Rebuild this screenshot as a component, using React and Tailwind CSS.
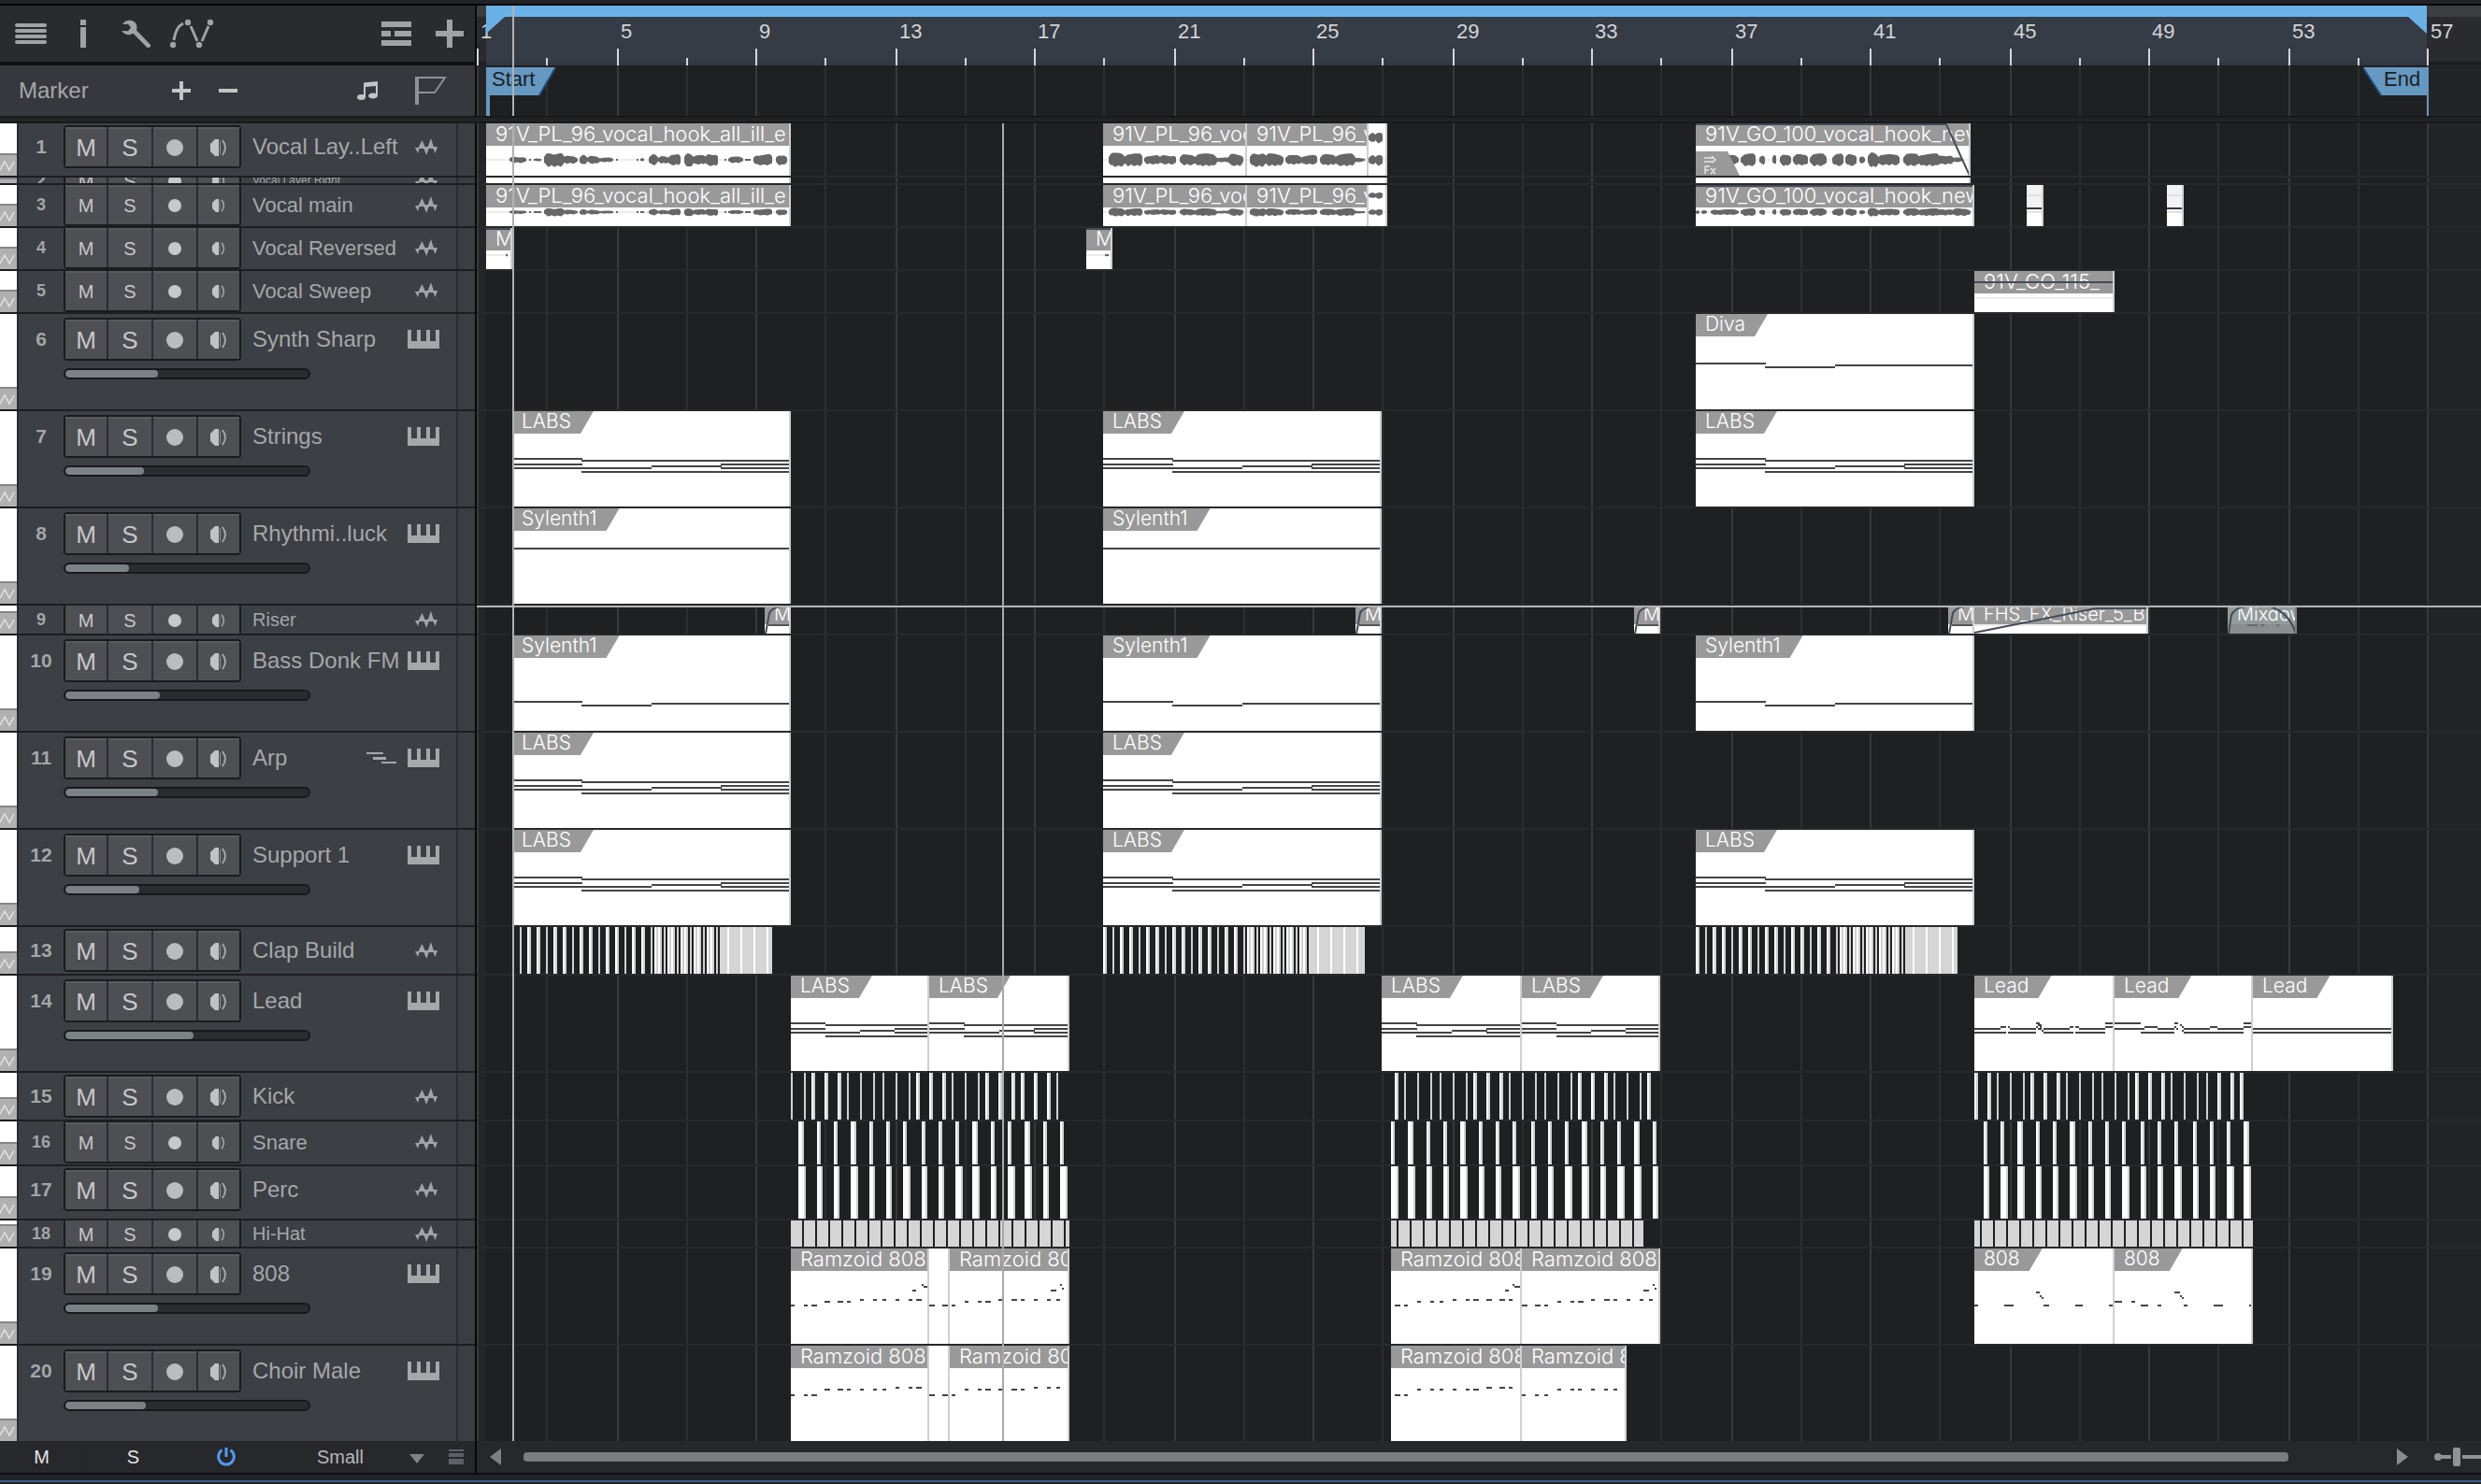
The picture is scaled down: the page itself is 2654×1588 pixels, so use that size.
import React from 'react';

const PX_PER_TICK = 74.5;
const tickX = (n) => 2 * Math.round((n * PX_PER_TICK) / 2);
const TICKS = Array.from({ length: 29 }, (_, n) => n);
const LOOP_START = 10;
const LOOP_END = 2086;

// note lanes are [x, y, width], x and width as a share of the clip
const chord = [
  [0, 50, 0.25], [0, 56, 0.25], [0, 60, 0.5],
  [0.25, 52, 0.75], [0.25, 64, 0.75], [0.5, 58, 0.25],
  [0.75, 56, 0.25], [0.75, 60, 0.25],
];
const flat = [[0, 42, 1]];
const bass = [[0, 70, 0.25], [0.25, 74, 0.25], [0.5, 72, 0.5]];
const diva = [[0, 52, 0.25], [0.25, 56, 0.25], [0.5, 54, 0.5]];

// melodic notes are [x, y, width] in px from the clip start
const leadA = [
  [0, 56, 28], [38, 56, 28], [74, 56, 28], [112, 56, 28],
  [0, 60, 34], [36, 60, 30], [74, 60, 32], [108, 60, 32],
  [28, 54, 6], [36, 54, 2], [66, 54, 2], [70, 54, 2], [102, 54, 4], [108, 54, 4], [140, 54, 10],
  [66, 50, 4], [140, 50, 10], [68, 52, 4], [68, 56, 4], [72, 58, 2],
];
const leadB = [
  [0, 50, 28], [64, 50, 4], [138, 50, 10],
  [32, 54, 14], [72, 54, 2], [102, 54, 8], [138, 54, 10],
  [0, 56, 32], [46, 56, 18], [74, 56, 28], [110, 56, 28],
  [28, 60, 36], [74, 60, 64],
  [64, 54, 2], [66, 56, 2], [70, 52, 2], [72, 58, 2],
];
const leadC = [[0, 56, 150], [0, 60, 150]];

const sub1 = [
  [0, 60, 4], [14, 60, 4], [22, 60, 6], [36, 56, 6], [50, 56, 6], [60, 56, 4],
  [74, 54, 4], [88, 54, 4], [98, 54, 4], [112, 54, 4], [126, 54, 4], [134, 54, 6],
  [130, 44, 4], [140, 38, 2], [142, 40, 4], [146, 42, 2],
];
const sub2 = [
  [0, 60, 6], [14, 60, 6], [24, 60, 4], [38, 56, 4], [52, 56, 4], [60, 56, 6],
  [74, 54, 4], [88, 54, 6], [98, 54, 4], [112, 54, 4], [126, 54, 4], [136, 54, 4],
  [130, 44, 6], [140, 38, 2], [142, 42, 2],
];
const sub3 = [
  [4, 60, 6], [14, 60, 4], [28, 56, 4], [42, 56, 4], [52, 56, 4], [66, 54, 4],
  [80, 54, 4], [88, 54, 6], [102, 54, 6], [116, 54, 6], [126, 54, 4],
  [122, 44, 4], [130, 38, 2], [132, 40, 6], [138, 42, 2],
];
const choir1 = [
  [0, 52, 4], [14, 52, 4], [22, 52, 6], [36, 46, 6], [50, 46, 6], [60, 46, 4],
  [74, 46, 4], [88, 46, 4], [98, 46, 4], [112, 44, 4], [126, 44, 4], [134, 44, 6],
];
const choir2 = [
  [0, 52, 6], [14, 52, 6], [24, 52, 4], [38, 46, 4], [52, 46, 4], [60, 46, 6],
  [74, 46, 4], [88, 46, 6], [98, 46, 4], [112, 44, 4], [126, 44, 4], [136, 44, 4],
];
const choir3 = [
  [4, 52, 6], [14, 52, 4], [28, 46, 4], [42, 46, 4], [52, 46, 4], [66, 46, 4],
  [80, 46, 4], [88, 46, 6], [102, 44, 6], [116, 44, 6], [126, 44, 4],
];
const choir4 = [
  [0, 52, 4], [14, 52, 4], [24, 52, 4], [38, 46, 4], [52, 46, 4], [60, 46, 4],
  [74, 46, 4], [88, 46, 4], [98, 46, 4],
];
const eightA = [[0, 60, 4], [32, 60, 10], [74, 60, 6], [108, 60, 8], [144, 60, 6], [66, 46, 4], [70, 50, 2], [72, 52, 2]];
const eightB = [
  [0, 56, 8], [18, 56, 4], [28, 60, 8], [46, 60, 4], [74, 60, 4], [106, 60, 10], [144, 60, 4],
  [64, 46, 6], [70, 50, 2], [72, 52, 2],
];

// wave blobs are [from, to, amplitude]
const hookA = [
  [25, 43, 4], [46, 48, 2], [51, 59, 2], [62, 84, 9], [82, 98, 5], [100, 108, 7], [108, 122, 5], [120, 136, 3],
  [139, 141, 1], [161, 163, 1], [165, 169, 3], [174, 184, 7], [184, 196, 5], [194, 209, 7], [212, 222, 10],
  [220, 236, 6], [234, 249, 8], [255, 257, 2], [259, 275, 4], [277, 283, 2], [286, 307, 7], [310, 322, 7],
];
const hookB = [[6, 24, 9], [22, 43, 8], [44, 62, 6], [60, 79, 6], [82, 100, 7], [98, 122, 8], [118, 138, 3], [134, 150, 8]];
const hookC = [[3, 21, 9], [19, 39, 8], [41, 59, 6], [57, 76, 6], [78, 96, 7], [94, 116, 8], [112, 126, 3]];
const hookTail = [[0, 8, 7], [7, 16, 8]];
const goHook = [
  [0, 4, 6], [6, 12, 5], [16, 46, 6], [48, 65, 8], [68, 75, 7], [82, 87, 8], [90, 102, 8], [104, 121, 7], [122, 140, 8],
  [146, 159, 8], [160, 173, 8], [175, 181, 6], [184, 196, 10], [194, 219, 7], [222, 240, 8], [238, 262, 8],
];

const SYMS = { thin: 2, mid: 4, six: 6, wide: 8 };
const bars = (start, kind, xs) => xs.map((x) => [start + x, SYMS[kind]]);

const kick = [
  ...bars(336, 'thin', [0, 14, 60, 74, 88, 98, 112, 126, 172, 186, 200, 284]),
  ...bars(336, 'mid', [22, 36, 50, 134, 148, 162, 208, 222, 236, 246, 260, 274]),
  ...bars(978, 'thin', [14, 28, 42, 52, 66, 80, 126, 140, 154, 164, 178, 192, 238, 252, 266]),
  ...bars(978, 'mid', [4, 88, 102, 116, 200, 214, 228, 274]),
  ...bars(1602, 'thin', [24, 38, 52, 98, 112, 126, 136, 150, 164, 210, 224, 238, 248]),
  ...bars(1602, 'mid', [0, 14, 60, 74, 88, 172, 186, 200, 260, 274, 284]),
];
const snare = [
  ...bars(344, 'six', [0, 56, 186, 242]),
  ...bars(344, 'mid', [20, 38, 76, 94, 112, 132, 150, 168, 206, 224, 262, 280]),
  ...bars(978, 'six', [18, 74, 204, 260]),
  ...bars(978, 'mid', [0, 38, 56, 94, 112, 130, 150, 168, 186, 224, 242, 280]),
  ...bars(1612, 'six', [36, 92, 278]),
  ...bars(1612, 'mid', [0, 18, 56, 74, 112, 130, 148, 168, 186, 204, 224, 242, 260]),
];
const perc = [
  ...bars(344, 'wide', [0, 56, 112, 168, 186, 224, 242, 280]),
  ...bars(344, 'six', [20, 38, 76, 94, 132, 150, 206, 262]),
  ...bars(978, 'wide', [0, 18, 74, 130, 186, 204, 242, 260]),
  ...bars(978, 'six', [38, 56, 94, 112, 150, 168, 224, 280]),
  ...bars(1612, 'wide', [18, 36, 92, 148, 204, 260, 278]),
  ...bars(1612, 'six', [0, 56, 74, 112, 130, 168, 186, 224, 242]),
];

function clapBuild(start, skip) {
  const out = [];
  [0, 10, 18, 28, 38, 46, 56, 66, 74, 84, 94, 102, 112, 122, 130, 140].forEach((x) => {
    if (x >= skip) out.push([start + x, x % 28 === 10 ? 2 : 4]);
  });
  for (let x = 150; x < 222; x += 14) {
    out.push([start + x, 2], [start + x + 4, 4], [start + x + 8, 4]);
  }
  return out;
}
const claps = [...clapBuild(36, 8), ...clapBuild(670, 0), ...clapBuild(1304, 0)];

const hook = '91V_PL_96_vocal_hook_all_ill_e';
const goName = '91V_GO_100_vocal_hook_new';
const labs = (x, w = 298) => ({ x, w, tag: 'LABS', shares: chord });
const syl = (x, shares, w = 298) => ({ x, w, tag: 'Sylenth1', shares });
const riser = (x) => ({ x, w: 28, title: 'M', short: true, fade: 'M1 30 L5 8 Q8 2 18 1', line: true });

const TRACKS = [
  {
    name: 'Vocal Lay..Left', type: 'audio', size: 'mid', height: 'h-[58px]',
    clips: [
      { x: 10, w: 326, title: hook, wave: hookA, mid: 39 },
      { x: 670, w: 154, title: hook, wave: hookB, mid: 39 },
      { x: 824, w: 130, title: hook, wave: hookC, mid: 39 },
      { x: 954, w: 20, wave: hookTail, mid: 39, twin: 15 },
      { x: 1304, w: 294, title: goName, wave: [...goHook, [258, 276, 6], [274, 286, 3]], mid: 39, fade: 'M0 1 H268 L293 56', fx: true },
    ],
  },
  {
    name: 'Vocal Layer Right', type: 'audio', size: 'sliver', height: 'h-[8px]',
    clips: [{ x: 10, w: 326 }, { x: 670, w: 304 }, { x: 1304, w: 294 }],
  },
  {
    name: 'Vocal main', type: 'audio', size: 'small', height: 'h-[46px]',
    clips: [
      { x: 10, w: 326, title: hook, wave: hookA, mid: 29, gain: 0.5 },
      { x: 670, w: 154, title: hook, wave: hookB, mid: 29, gain: 0.5 },
      { x: 824, w: 130, title: hook, wave: hookC, mid: 29, gain: 0.5 },
      { x: 954, w: 20, wave: hookTail, mid: 29, twin: 11, gain: 0.5 },
      { x: 1304, w: 298, title: goName, wave: [...goHook, [258, 276, 7], [274, 294, 8]], mid: 29, gain: 0.5, fade: 'M0 1 H298' },
      { x: 1658, w: 18, cut: true },
      { x: 1808, w: 18, cut: true },
    ],
  },
  {
    name: 'Vocal Reversed', type: 'audio', size: 'small', height: 'h-[46px]',
    clips: [
      { x: 10, w: 28, title: 'M', wave: [[21, 24, 3]], mid: 29, fade: 'M0 1 H27' },
      { x: 652, w: 28, title: 'M', wave: [[20, 24, 2]], mid: 29, fade: 'M0 1 H27' },
    ],
  },
  {
    name: 'Vocal Sweep', type: 'audio', size: 'small', height: 'h-[46px]',
    clips: [{ x: 1602, w: 150, title: '91V_GO_115_', wave: [], mid: 29, fade: 'M0 12 H150' }],
  },
  { name: 'Synth Sharp', type: 'keys', size: 'tall', height: 'h-[104px]', level: 36, clips: [{ x: 1304, w: 298, tag: 'Diva', shares: diva }] },
  { name: 'Strings', type: 'keys', size: 'tall', height: 'h-[104px]', level: 30, clips: [labs(38), labs(670), labs(1304)] },
  { name: 'Rhythmi..luck', type: 'keys', size: 'tall', height: 'h-[104px]', level: 24, clips: [syl(38, flat), syl(670, flat)] },
  {
    name: 'Riser', type: 'audio', size: 'tiny', height: 'h-[32px]',
    clips: [
      riser(308), riser(940), riser(1238), riser(1574),
      { x: 1602, w: 186, title: 'FHS_FX_Riser_5_B', short: true, fade: 'M0 29 L130 3 H186' },
      { x: 1873, w: 74, title: 'Mixdown', short: true, muted: true, fade: 'M1 30 L4 10 Q8 2 20 1 M46 1 Q66 8 73 30' },
    ],
  },
  { name: 'Bass Donk FM', type: 'keys', size: 'tall', height: 'h-[104px]', level: 37, clips: [syl(38, bass), syl(670, bass), syl(1304, bass)] },
  { name: 'Arp', type: 'keys', size: 'tall', height: 'h-[104px]', level: 36, arp: true, clips: [labs(38), labs(670)] },
  { name: 'Support 1', type: 'keys', size: 'tall', height: 'h-[104px]', level: 28, clips: [labs(38), labs(670), labs(1304)] },
  { name: 'Clap Build', type: 'audio', size: 'mid', height: 'h-[52px]', slices: claps, solid: [[260, 56], [891, 59], [1528, 56]] },
  {
    name: 'Lead', type: 'keys', size: 'tall', height: 'h-[104px]', level: 51,
    clips: [
      labs(336, 148), labs(484, 150), labs(968, 150), labs(1118, 148),
      { x: 1602, w: 150, tag: 'Lead', notes: leadA },
      { x: 1752, w: 148, tag: 'Lead', notes: leadB },
      { x: 1900, w: 150, tag: 'Lead', notes: leadC },
    ],
  },
  { name: 'Kick', type: 'audio', size: 'mid', height: 'h-[52px]', slices: kick },
  { name: 'Snare', type: 'audio', size: 'small', height: 'h-[48px]', slices: snare },
  { name: 'Perc', type: 'audio', size: 'mid', height: 'h-[58px]', slices: perc },
  { name: 'Hi-Hat', type: 'audio', size: 'tiny', height: 'h-[30px]', hats: [[336, 298, 12], [978, 270, 6], [1602, 298, 6]] },
  {
    name: '808', type: 'keys', size: 'tall', height: 'h-[104px]', level: 36,
    clips: [
      { x: 336, w: 148, title: 'Ramzoid 808 (', notes: sub1 },
      { x: 484, w: 22, notes: sub2.slice(0, 2) },
      { x: 506, w: 128, title: 'Ramzoid 808 (', notes: sub2.slice(2).map(([x, y, w]) => [x - 22, y, w]) },
      { x: 978, w: 140, title: 'Ramzoid 808 (', notes: sub3 },
      { x: 1118, w: 148, title: 'Ramzoid 808 (', notes: sub2 },
      { x: 1602, w: 150, tag: '808', notes: eightA },
      { x: 1752, w: 148, tag: '808', notes: eightB },
    ],
  },
  {
    name: 'Choir Male', type: 'keys', size: 'tall', height: 'h-[102px]', level: 31, last: true,
    clips: [
      { x: 336, w: 148, title: 'Ramzoid 808 (', notes: choir1 },
      { x: 484, w: 22, notes: choir2.slice(0, 2) },
      { x: 506, w: 128, title: 'Ramzoid 808 (', notes: choir2.slice(2).map(([x, y, w]) => [x - 22, y, w]) },
      { x: 978, w: 140, title: 'Ramzoid 808 (', notes: choir3 },
      { x: 1118, w: 112, title: 'Ramzoid 808 (', notes: choir4 },
    ],
  },
];

function AudioIcon() {
  return (
    <svg viewBox="0 0 24 18" className="w-6 h-[18px] mr-0.5" fill="#a1a3a6">
      <path d="M0 10h5l-2 6z M3 11L7.500 2L11.500 11z M8.500 9h7l-3.300 9z M13 11L17 0l3.500 11z M18.500 9H24l-2.500 7z" />
    </svg>
  );
}

function KeysIcon() {
  return (
    <svg viewBox="0 0 34 20" className="w-[34px] h-5" fill="#a5a7a9">
      <path d="M0 0h4v12h6V0h4v12h6V0h4v12h6V0h4v20H0z" />
    </svg>
  );
}

function ArpIcon() {
  return (
    <svg viewBox="0 0 32 16" className="w-8 h-4 mr-3" fill="#a5a7a9">
      <path d="M0 2h18v2H0z M7 7h14v3H7z M16 12h16v2H16z" />
    </svg>
  );
}

function MonitorIcon({ small }) {
  return (
    <svg viewBox="0 0 18 18" className={small ? 'w-3.5 h-3.5' : 'w-[18px] h-[18px]'}>
      <path d="M0 5L5 0h4v18H5L0 13z" fill="#c0c2c4" />
      <path d="M10.500 2v14" stroke="#8a8c8f" strokeWidth="1" />
      <path d="M13 1q6 8 0 16" stroke="#a9abad" strokeWidth="1.800" fill="none" />
    </svg>
  );
}

function TrackButtons({ small, name }) {
  const cell = 'flex items-center justify-center h-full bg-[#4e4f53] border-t-2 border-[#595a5e] text-[#c6c8ca]';
  const text = small ? 'text-[20px]' : 'text-[26px]';
  return (
    <div className="grid grid-cols-[44px_46px_46px_44px] gap-0.5 w-[190px] h-[46px] shrink-0 border-2 border-[#1a1b1d] bg-[#2b2c33] rounded">
      <button className={`${cell} ${text}`} aria-label={`Mute ${name}`}>M</button>
      <button className={`${cell} ${text}`} aria-label={`Solo ${name}`}>S</button>
      <button className={cell} aria-label={`Record ${name}`}>
        <span className={small ? 'w-3.5 h-3.5 rounded-full bg-[#c6c8ca]' : 'w-[18px] h-[18px] rounded-full bg-[#bbbcbe]'} />
      </button>
      <button className={cell} aria-label={`Monitor ${name}`}>
        <MonitorIcon small={small} />
      </button>
    </div>
  );
}

function LevelSlider({ level, name }) {
  return (
    <input
      type="range"
      aria-label={`${name} volume`}
      defaultValue={level}
      className="block appearance-none w-[264px] h-3 ml-12 mt-2 rounded-full border-2 border-[#18191b] bg-clip-padding bg-[#2b2c30] [&::-webkit-slider-thumb]:appearance-none [&::-webkit-slider-thumb]:w-2 [&::-webkit-slider-thumb]:h-2 [&::-webkit-slider-thumb]:rounded-r-full [&::-webkit-slider-thumb]:bg-[#7b8184]"
      style={{ backgroundImage: `linear-gradient(to right, #7b8184 ${level}%, transparent ${level}%)` }}
    />
  );
}

const NAME_SIZE = {
  tall: 'text-[24px]',
  mid: 'text-[24px]',
  small: 'text-[22px]',
  tiny: 'text-[20px]',
  sliver: 'text-[12px]',
};

const PAD = {
  tall: 'pt-1',
  mid: 'pt-0.5',
  small: 'justify-center pb-0.5',
  tiny: 'justify-center',
  sliver: 'justify-center',
};

function TrackHeader({ track, index }) {
  const small = track.size === 'small' || track.size === 'tiny' || track.size === 'sliver';
  return (
    <div className={`flex ${track.height} overflow-hidden ${track.last ? '' : 'border-b-2 border-[#1d1e20]'}`}>
      <div className="flex flex-col w-5 shrink-0 border-r-2 border-[#2a2b2e] overflow-hidden">
        <div className="flex-1 bg-white" />
        <div className={`${track.size === 'sliver' ? 'h-1.5' : 'h-6'} shrink-0 bg-[#b0b0b0] border-t-2 border-[#868686]`}>
          <svg viewBox="0 0 18 22" className="w-[18px] h-[22px]" fill="none" stroke="#e4e4e4" strokeWidth="1.500">
            <path d="M0 16L5 7l5 9L15 7" />
          </svg>
        </div>
      </div>
      <div className={`flex flex-col flex-1 min-w-0 bg-[#3c3f44] ${PAD[track.size]}`}>
        <div className="flex items-center shrink-0 h-[46px]">
          <span className={`w-12 text-center font-bold text-[#a3a5a8] ${small ? 'text-[18px]' : 'text-[21px]'}`}>
            {index + 1}
          </span>
          <TrackButtons small={small} name={track.name} />
          <span className={`flex-1 min-w-0 pl-3 whitespace-nowrap text-[#a5a7aa] ${NAME_SIZE[track.size]}`}>{track.name}</span>
          {track.arp && <ArpIcon />}
          <span className="pr-[18px]">{track.type === 'keys' ? <KeysIcon /> : <AudioIcon />}</span>
        </div>
        {track.level && <LevelSlider level={track.level} name={track.name} />}
      </div>
      <div className="w-5 shrink-0 bg-[#3a3d42] border-l-2 border-[#2a2c2f]" />
    </div>
  );
}

// builds a jagged, closed outline around the mid line
function wavePath(blobs, mid, gain) {
  return blobs
    .map(([from, to, amp]) => {
      const top = [];
      const bottom = [];
      for (let x = from; x <= to; x += 2) {
        const edge = Math.min(1, 0.4 + Math.min(x - from, to - x) / 5);
        const up = Math.max(1, amp * gain * edge * (0.7 + 0.3 * Math.abs(Math.sin(x * 1.7))));
        const down = Math.max(1, amp * gain * edge * (0.7 + 0.3 * Math.abs(Math.cos(x * 1.1))));
        top.push(`${x} ${(mid - up).toFixed(1)}`);
        bottom.unshift(`${x} ${(mid + down).toFixed(1)}`);
      }
      return `M${[...top, ...bottom].join('L')}Z`;
    })
    .join('');
}

function Clip({ clip }) {
  const { x, w, title, tag, notes, shares, wave, mid, twin, gain = 0.85, fade, fx, cut, short, line, muted } = clip;
  const marks = notes || (shares || []).map(([nx, y, nw]) => [Math.floor(nx * w), y, Math.ceil(nw * w)]);
  return (
    <div
      className={`absolute top-0 bottom-0 overflow-hidden border-r-2 font-['Inter','Liberation_Sans',sans-serif] font-light text-white ${muted ? 'bg-[#8b8d8f] border-[#7c7e80]' : 'bg-white border-[#d0d0d0]'}`}
      style={{ left: x, width: w }}
    >
      {title && (
        <div
          className={`pl-2.5 -mr-0.5 whitespace-nowrap ${short ? 'h-5 leading-[18px] text-[20px]' : 'h-6 leading-[22px] text-[22px]'} ${muted ? 'bg-[#939b9b]' : 'bg-[#999999]'}`}
        >
          {title}
        </div>
      )}
      {tag && (
        <div className="inline-block align-top h-6 pl-2.5 pr-6 leading-[22px] text-[21px] bg-[#999999] [clip-path:polygon(0_0,100%_0,calc(100%-14px)_100%,0_100%)]">
          {tag}
        </div>
      )}
      <svg className="absolute left-0 top-0" width={w} height="104">
        {wave && <path d={`M0 ${mid}H${w}`} stroke="#ececec" strokeWidth="2" />}
        {wave && <path d={wavePath(fx ? wave.slice(2) : wave, mid, gain)} fill="#666666" />}
        {twin && <path d={wavePath(wave, twin, gain)} fill="#666666" />}
        {line && <path d="M4 21H28" stroke="#555" strokeWidth="2" />}
        {short && !line && !muted && <path d={`M0 21H${w}`} stroke="#ececec" strokeWidth="2" />}
        {muted && <path d="M20 20h12v2h-10z M34 20h6l-2 3z M51 20h4v3z" fill="#666a6c" />}
        {cut && <path d="M0 0h18v24H0z" fill="#f2f2f2" />}
        {cut && <path d="M0 11H18M0 29H18" stroke="#e2e2e2" strokeWidth="2" />}
        {cut && <path d="M0 25H18" stroke="#343943" strokeWidth="2" />}
        {fx && <path d="M0 30H34L47 56H0z" fill="#999999" />}
        {fx && <path d="M9 37H19M9 41H20M17 35l4 4-4 3M10 46v8M10 46h5M10 50h4M16 48l5 6M21 48l-5 6" stroke="#e6e6e6" strokeWidth="1.500" fill="none" />}
        {fade && <path d={fade} stroke="#454b57" strokeWidth="2" fill="none" />}
        {marks.map(([nx, y, nw], i) => (
          <rect key={i} x={nx} y={y} width={nw} height="2" fill="#444444" />
        ))}
      </svg>
    </div>
  );
}

function Slices({ slices }) {
  return (
    <svg className="absolute inset-0 w-full h-full">
      {slices.map(([x, w], i) => (
        <g key={i}>
          <rect x={x} y="0" width={w - 2} height="100%" fill="#ffffff" />
          <rect x={x + w - 2} y="0" width="2" height="100%" fill="#d0d0d0" />
        </g>
      ))}
    </svg>
  );
}

function SolidBuild({ blocks }) {
  return (
    <svg className="absolute inset-0 w-full h-full">
      {blocks.map(([x, w]) => (
        <g key={x}>
          <rect x={x} y="0" width={w} height="100%" fill="#d5d5d5" />
          {[8, 22, 36, 50].map((o) => (
            <rect key={o} x={x + o} y="0" width="2" height="100%" fill="#ffffff" />
          ))}
        </g>
      ))}
    </svg>
  );
}

function Hats({ runs }) {
  return (
    <svg className="absolute inset-0 w-full h-full">
      {runs.map(([x, w, first]) => (
        <g key={x}>
          <rect x={x} y="0" width={w} height="100%" fill="#d5d5d5" />
          {Array.from({ length: Math.ceil((w - first) / 14) }, (_, i) => (
            <rect key={i} x={x + first + i * 14} y="0" width="2" height="100%" fill="#1f2022" />
          ))}
        </g>
      ))}
    </svg>
  );
}

function Lane({ track }) {
  return (
    <div className={`${track.height} ${track.last ? '' : 'border-b-2 border-[#28292b]'}`}>
      <div className="relative h-full">
        {track.slices && <Slices slices={track.slices} />}
        {track.solid && <SolidBuild blocks={track.solid} />}
        {track.hats && <Hats runs={track.hats} />}
        {track.clips?.map((clip, i) => <Clip key={i} clip={clip} />)}
      </div>
    </div>
  );
}

function Grid() {
  return (
    <svg className="absolute inset-0 w-full h-full">
      <rect x="0" y="0" width="10" height="100%" fill="#242528" />
      <rect x={LOOP_END} y="0" width="100%" height="100%" fill="#232426" />
      {TICKS.map((n) => (
        <rect key={n} x={tickX(n)} y="0" width="2" height="100%" fill={n % 2 ? '#2d2e30' : '#38393b'} />
      ))}
    </svg>
  );
}

function Ruler() {
  return (
    <div className="relative h-16 bg-[#2a2b2f] overflow-hidden">
      <svg className="absolute inset-0 w-full h-full">
        <rect x="0" y="0" width="100%" height="12" fill="#3c3d41" />
        <rect x="0" y="60" width="100%" height="4" fill="#1d1e20" />
        <rect x={LOOP_START} y="0" width={LOOP_END - LOOP_START} height="64" fill="#363c46" />
        <rect x={LOOP_START} y="60" width={LOOP_END - LOOP_START} height="4" fill="#323742" />
        {TICKS.map((n) => (
          <rect key={n} x={tickX(n)} y={n % 2 ? 56 : 46} width="2" height="18" fill="#d5d6d8" />
        ))}
      </svg>
      {TICKS.filter((n) => n % 2 === 0).map((n) => (
        <span key={n} className="absolute top-3 leading-[32px] text-[22px] text-[#d2d4d6]" style={{ left: tickX(n) + 4 }}>
          {n * 2 + 1}
        </span>
      ))}
      <svg className="absolute inset-0 w-full h-full" fill="#6ab1e7">
        <path d={`M${LOOP_START} 0H${LOOP_END}V30L${LOOP_END - 20} 12H${LOOP_START + 20}L${LOOP_START} 30z`} />
      </svg>
    </div>
  );
}

function MarkerTrack() {
  return (
    <div className="relative h-[54px] overflow-hidden">
      <Grid />
      <svg className="absolute inset-0 w-full h-full">
        <path d="M10 2H84L67 32H14V54H10z" fill="#6699c2" />
        <path d="M84 3L67 32" stroke="#1f4b73" strokeWidth="2" />
        <path d={`M${LOOP_END + 2} 2H${LOOP_END - 68}L${LOOP_END - 49} 32H${LOOP_END}V54H${LOOP_END + 2}z`} fill="#6699c2" />
        <path d={`M${LOOP_END - 68} 3L${LOOP_END - 49} 32`} stroke="#1f4b73" strokeWidth="2" />
      </svg>
      <span className="absolute left-4 top-0.5 leading-[26px] text-[22px] text-[#1c2024]">Start</span>
      <span className="absolute left-[2040px] top-0.5 leading-[26px] text-[22px] text-[#1c2024]">End</span>
    </div>
  );
}

function Toolbar() {
  return (
    <div className="flex items-center h-16 pl-4 pr-3 bg-[#2a2b2f] border-b-4 border-[#101113]">
      <button aria-label="Track list">
        <svg viewBox="0 0 34 32" className="w-[34px] h-8" fill="#a1a2a5">
          {[5, 11, 17, 23].map((y) => <rect key={y} x="0" y={y} width="34" height="4" rx="2" />)}
        </svg>
      </button>
      <button aria-label="Inspector" className="ml-9">
        <svg viewBox="0 0 6 32" className="w-1.5 h-8" fill="#a1a2a5">
          <path d="M0 1h6v6H0z M0 9h6v22H0z" />
        </svg>
      </button>
      <button aria-label="Tools" className="ml-[38px]">
        <svg viewBox="0 0 32 32" className="w-8 h-8" fill="#a1a2a5">
          <path d="M1 6C4 0 16 0 16.500 9c0 1.500-.3 2.500-.6 3.300L31 28c1 2-2 4-4 2.500L12.500 15.800C8 18.500 3 17 0 13l7 .3 3-3.800-3-3.700z" />
        </svg>
      </button>
      <button aria-label="Automation" className="ml-5">
        <svg viewBox="0 0 47 32" className="w-[47px] h-8">
          <path d="M4 23Q6 9 14 5M22 8l7 16M34 24l7-16" stroke="#a1a2a5" strokeWidth="3" fill="none" />
          <g fill="#a1a2a5">
            <circle cx="3" cy="28" r="3.200" />
            <circle cx="19" cy="4" r="3.200" />
            <circle cx="31" cy="28" r="3.200" />
            <circle cx="43" cy="4" r="3.200" />
          </g>
        </svg>
      </button>
      <button aria-label="Arrange view" className="ml-auto">
        <svg viewBox="0 0 32 32" className="w-8 h-8" fill="#a1a2a5">
          <path d="M0 3h32v6H0z M0 13h10v6H0z M14 13h18v6H14z M0 23h32v6H0z" />
        </svg>
      </button>
      <button aria-label="Add track" className="ml-[26px]">
        <svg viewBox="0 0 30 32" className="w-[30px] h-8" fill="#a1a2a5">
          <path d="M12 1h6v12h12v6H18v12h-6V19H0v-6h12z" />
        </svg>
      </button>
    </div>
  );
}

function MarkerHeader() {
  return (
    <div className="flex items-center h-[54px] pl-5 pr-[30px] bg-[#37383d]">
      <span className="w-[164px] text-[24px] text-[#a5a7aa]">Marker</span>
      <button aria-label="Add marker">
        <svg viewBox="0 0 20 20" className="w-5 h-5" fill="#c4c5c7"><path d="M8 0h4v8h8v4h-8v8H8v-8H0V8h8z" /></svg>
      </button>
      <button aria-label="Remove marker" className="ml-[30px]">
        <svg viewBox="0 0 20 20" className="w-5 h-5" fill="#c4c5c7"><path d="M0 8h20v4H0z" /></svg>
      </button>
      <button aria-label="Timebase" className="ml-auto">
        <svg viewBox="0 0 22 20" className="w-[22px] h-5" fill="#c4c5c7">
          <path d="M7 1.500L22 0v16h-2V5L9 6v11H7z" />
          <ellipse cx="4.500" cy="17" rx="4.500" ry="3" />
          <ellipse cx="17" cy="15.500" rx="5" ry="3" />
        </svg>
      </button>
      <button aria-label="Flag" className="ml-10">
        <svg viewBox="0 0 34 30" className="w-[34px] h-[30px]" fill="none" stroke="#8f9194">
          <path d="M2 0v30" strokeWidth="4" />
          <path d="M2 1H32L21 17H2" strokeWidth="2" />
        </svg>
      </button>
    </div>
  );
}

function FooterLeft() {
  return (
    <div className="flex items-stretch w-[510px] shrink-0 border-r-2 border-[#08090a] text-[20px]">
      <button className="w-[90px] text-[#e3e4e5] border-r border-[#252628]">M</button>
      <button className="w-[106px] text-[#e3e4e5] border-r border-[#252628]">S</button>
      <button className="w-[92px] flex items-center justify-center" aria-label="Power">
        <svg viewBox="0 0 20 20" className="w-5 h-5" fill="none" stroke="#519aee" strokeWidth="3">
          <path d="M5.500 2.800a8.300 8.300 0 1 0 9 0M10 0v10" />
        </svg>
      </button>
      <div className="relative flex-1">
        <select aria-label="Track height" className="appearance-none w-[152px] h-full text-center text-[20px] text-[#b5b7ba] bg-transparent">
          <option>Small</option>
        </select>
        <svg viewBox="0 0 16 10" className="absolute left-[150px] top-3.5 w-4 h-2.5 pointer-events-none" fill="#808184"><path d="M0 0h16L8 10z" /></svg>
      </div>
      <button className="mr-3" aria-label="Menu">
        <svg viewBox="0 0 16 18" className="w-4 h-[18px]" fill="#5f6066"><path d="M0 1h16v2H0z M0 5h16v4H0z M0 11h16v6H0z" /></svg>
      </button>
    </div>
  );
}

function FooterScroll() {
  return (
    <div className="flex items-center flex-1 min-w-0 pl-3.5">
      <button aria-label="Scroll left">
        <svg viewBox="0 0 12 18" className="w-3 h-[18px]" fill="#7f8083"><path d="M12 0v18L0 9z" /></svg>
      </button>
      <div className="flex-1 ml-6 mr-[116px]">
        <div className="h-2.5 rounded-sm bg-[#7b7c7f]" />
      </div>
      <button aria-label="Scroll right">
        <svg viewBox="0 0 12 18" className="w-3 h-[18px]" fill="#8b8c8f"><path d="M0 0v18l12-9z" /></svg>
      </button>
      <svg viewBox="0 0 50 20" className="w-[50px] h-5 ml-7" fill="#909193">
        <path d="M4 8h14v4H4z M30 8h20v4H30z" />
        <circle cx="4" cy="10" r="4" />
        <rect x="20" y="0" width="8" height="20" rx="2" />
      </svg>
    </div>
  );
}

export default function App() {
  return (
    <div className="min-h-screen flex flex-col bg-[#222326] font-['Liberation_Sans',Arial,sans-serif] overflow-hidden">
      <div className="h-1.5 border-b-2 border-[#060607]" />

      {/* Toolbar, ruler and marker track */}
      <div className="flex">
        <div className="w-[510px] shrink-0 border-r-2 border-[#08090a]">
          <Toolbar />
          <MarkerHeader />
        </div>
        <div className="relative flex-1 min-w-0 bg-[#1f2022]">
          <Ruler />
          <MarkerTrack />
          <div className="absolute left-[38px] top-0 bottom-0 w-0.5 bg-[#b0b0b0]" />
        </div>
      </div>
      <div className="h-2 border-y-2 border-[#18191b]" />

      {/* Tracks */}
      <div className="flex">
        <div className="w-[510px] shrink-0 border-r-2 border-[#08090a]">
          {TRACKS.map((track, i) => <TrackHeader key={track.name} track={track} index={i} />)}
        </div>
        <div className="relative flex-1 min-w-0 overflow-hidden bg-[#1f2022]">
          <Grid />
          <div className="relative">
            {TRACKS.map((track) => <Lane key={track.name} track={track} />)}
          </div>
          <div className="absolute left-[38px] top-0 bottom-0 w-0.5 bg-[#b0b0b0]" />
          <div className="absolute left-[562px] top-0 bottom-0 w-0.5 bg-[#a8a8a8]" />
          <div className="absolute top-[516px] left-0 right-0 h-0.5 bg-[#b4b6b5]" />
        </div>
      </div>

      {/* Footer */}
      <div className="flex h-9 bg-[#27282b] border-b-2 border-[#0c0d0e]">
        <FooterLeft />
        <FooterScroll />
      </div>
      <div className="h-2 border-b-2 border-[#3f5e8c]" />
    </div>
  );
}
